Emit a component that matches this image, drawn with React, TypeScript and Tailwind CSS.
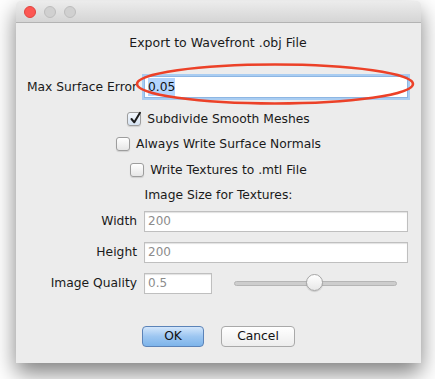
import React from "react";

const font = { fontFamily: '"DejaVu Sans", "Noto Sans", sans-serif' };

const Checkbox = ({ checked }: { checked?: boolean }) => (
  <span
    className={`relative inline-block w-[14px] h-[14px] rounded-[3px] border border-[#9d9d9d] bg-gradient-to-b shadow-[0_1px_1px_rgba(0,0,0,0.12)] ${
      checked ? "from-[#f4f8fd] to-[#d6e3f2]" : "from-white to-[#e6e6e6]"
    }`}
  >
    {checked && (
      <svg className="absolute left-[1px] top-[-2px]" width="13" height="14" viewBox="0 0 13 14">
        <path d="M2.5 8 L5.3 11.3 L11 1.8" fill="none" stroke="#1d1d1d" strokeWidth="2" strokeLinecap="round" strokeLinejoin="round" />
      </svg>
    )}
  </span>
);

const CheckRow = ({ label, checked }: { label: string; checked?: boolean }) => (
  <div className="flex items-center justify-center gap-[6px] pl-[6px] text-[12.3px] text-[#1a1a1a]">
    <Checkbox checked={checked} />
    <span>{label}</span>
  </div>
);

const Field = ({ value, wide = true }: { value: string; wide?: boolean }) => (
  <div
    className={`h-[21px] border border-[#bfbfbf] bg-white shadow-[inset_0_1px_1px_rgba(0,0,0,0.12)] flex items-center px-[3px] text-[12px] text-[#8c8c8c] ${
      wide ? "flex-1" : "w-[68px]"
    }`}
  >
    {value}
  </div>
);

const Row = ({ label, children }: { label: string; children: React.ReactNode }) => (
  <div className="flex items-center">
    <div className="w-[114px] text-right text-[12.3px] text-[#1a1a1a] shrink-0 whitespace-nowrap">{label}</div>
    <div className="ml-[7px] flex-1 flex items-center">{children}</div>
  </div>
);

export default function App() {
  return (
    <div className="w-[435px] h-[379px] bg-white overflow-hidden relative" style={font}>
      <div className="ml-[16px] mt-[1px] w-[405px] h-[362px] bg-[#ececec] rounded-t-[5px] shadow-[0_10px_22px_rgba(0,0,0,0.5)] flex flex-col">
        {/* title bar */}
        <div className="h-[22px] rounded-t-[5px] bg-gradient-to-b from-[#ececec] to-[#d5d5d5] border-b border-[#b3b3b3] flex items-center gap-[8px] pl-[8px]">
          <span className="w-[12px] h-[12px] rounded-full bg-[#fc5753] border border-[#e0443e]" />
          <span className="w-[12px] h-[12px] rounded-full bg-[#d0d0d0] border border-[#bdbdbd]" />
          <span className="w-[12px] h-[12px] rounded-full bg-[#d0d0d0] border border-[#bdbdbd]" />
        </div>

        <div className="flex-1 flex flex-col pl-[7px] pr-[13px]">
          <div className="mt-[11px] pl-[5px] text-center text-[12.5px] text-[#1a1a1a]">Export to Wavefront .obj File</div>

          <div className="mt-[23px]">
            <Row label="Max Surface Error">
              <div className="flex-1 h-[22px] bg-white border border-[#8db6e3] shadow-[0_0_0_2px_#a9cdf2] flex items-center px-[3px] text-[12.3px] text-[#111]">
                <span className="bg-[#b4d5fe]">0.05</span>
              </div>
            </Row>
          </div>

          <div className="mt-[12px]">
            <CheckRow label="Subdivide Smooth Meshes" checked />
          </div>
          <div className="mt-[7px]">
            <CheckRow label="Always Write Surface Normals" />
          </div>
          <div className="mt-[7px]">
            <CheckRow label="Write Textures to .mtl File" />
          </div>
          <div className="mt-[7px] pl-[6px] text-center text-[12.3px] text-[#1a1a1a]">Image Size for Textures:</div>

          <div className="mt-[6px] flex flex-col gap-[10px]">
            <Row label="Width">
              <Field value="200" />
            </Row>
            <Row label="Height">
              <Field value="200" />
            </Row>
            <Row label="Image Quality">
              <Field value="0.5" wide={false} />
              <div className="ml-[22px] mr-[11px] flex-1 relative h-[18px] flex items-center">
                <div className="w-full h-[5px] rounded-full bg-[#cdcdcd] border border-[#b5b5b5]" />
                <div className="absolute left-[72px] top-0 w-[17px] h-[17px] rounded-full border border-[#a6a6a6] bg-gradient-to-b from-white to-[#e8e8e8] shadow-[0_1px_1px_rgba(0,0,0,0.15)]" />
              </div>
            </Row>
          </div>

          <div className="mt-[32px] pl-[6px] flex justify-center gap-[17px]">
            <button className="w-[62px] h-[21px] rounded-[4px] border border-[#5b83b8] bg-gradient-to-b from-[#d3e6fb] via-[#9cc6f1] to-[#7db4ea] text-[12.3px] text-[#111] flex items-center justify-center">
              OK
            </button>
            <button className="w-[74px] h-[21px] rounded-[4px] border border-[#a9a9a9] bg-gradient-to-b from-white to-[#ededed] text-[12.3px] text-[#111] flex items-center justify-center">
              Cancel
            </button>
          </div>
        </div>
      </div>

      {/* red annotation ellipse */}
      <svg className="absolute left-[134px] top-[61px]" width="284" height="46" viewBox="0 0 284 46">
        <ellipse cx="141" cy="23" rx="138" ry="19.5" fill="none" stroke="#ec4128" strokeWidth="2.6" />
      </svg>
    </div>
  );
}
